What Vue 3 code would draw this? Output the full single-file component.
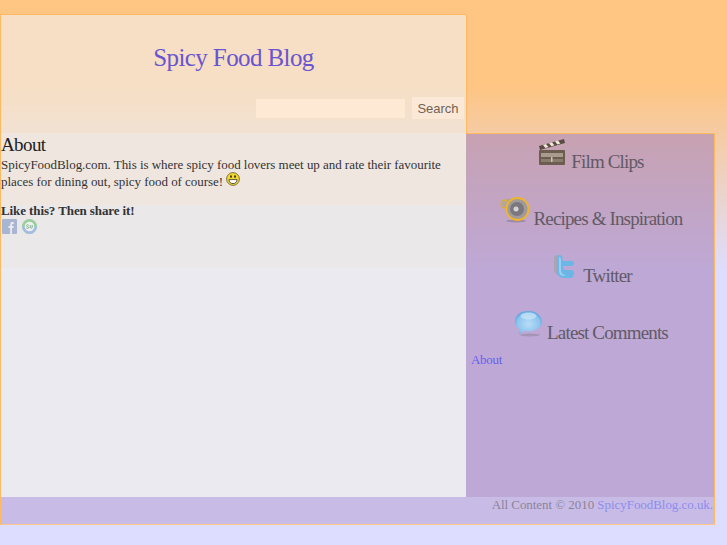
<template>
  <div class="page">
    <header class="header">
      <h1 class="header__title">Spicy Food Blog</h1>
      <form class="search" @submit.prevent>
        <input class="search__input" type="text" />
        <button class="search__button" type="button">Search</button>
      </form>
    </header>

    <div class="columns">
      <main class="main">
        <h2 class="main__heading">About</h2>
        <p class="main__text">
          SpicyFoodBlog.com. This is where spicy food lovers meet up and rate their favourite
          places for dining out, spicy food of course!
          <svg class="smiley" viewBox="0 0 14 14" width="14" height="14">
            <circle cx="7" cy="7" r="6.4" fill="#f4d72e" stroke="#6f6a3a" stroke-width="0.9" />
            <ellipse cx="5" cy="4.6" rx="0.9" ry="1.4" fill="#333" />
            <ellipse cx="9" cy="4.6" rx="0.9" ry="1.4" fill="#333" />
            <path d="M3 7.600h8c0 2.600-1.800 4-4 4s-4-1.400-4-4z" fill="#fff" stroke="#333" stroke-width="0.8" />
          </svg>
        </p>
        <h3 class="main__share">Like this? Then share it!</h3>
        <div class="share">
          <svg viewBox="0 0 15 15" width="15" height="15">
            <rect width="15" height="15" rx="1" fill="#a9b6d2" />
            <path d="M8.200 15V9h-1.700V7h1.700V5.400C8.200 3.600 9.200 3 10.600 3h1.200v2h-1c-.6 0-.8.3-.8.8V7h1.800l-.3 2H10v6z" fill="#eceaf0" />
          </svg>
          <svg viewBox="0 0 15 15" width="15" height="15">
            <circle cx="7.500" cy="7.500" r="7.500" fill="#97cf9c" />
            <path d="M0 7.500h15A7.500 7.500 0 0 1 0 7.500z" fill="#a3bde2" />
            <circle cx="7.500" cy="7.500" r="4.800" fill="#eef0ee" />
            <path d="M6.600 6.200c-.5-1-2-.6-2 .4 0 1.200 2 .8 2 2 0 1-1.600 1-2.200.3M8.200 6v2.400c0 1 2 1 2 0V6" fill="none" stroke="#7fae8d" stroke-width="1" />
          </svg>
        </div>
      </main>

      <aside class="sidebar">
        <a class="feature feature--film">
          <svg class="feature__icon" viewBox="0 0 28 28" width="28" height="28">
            <path d="M1 8 26 1l1 4-25 7z" fill="#5a4c42" />
            <path d="M5 6.900 8 6l2.400 3-3 .9zM11 5.200l3-.9 2.400 3-3 .9zM17 3.500l3-.9 2.400 3-3 .9z" fill="#efe9dc" />
            <rect x="1" y="12" width="26" height="15" rx="1" fill="#6c5d50" />
            <rect x="3" y="15" width="22" height="4" fill="#a79c8d" />
            <rect x="3" y="21" width="22" height="3" fill="#8b7d6e" />
            <rect x="13" y="19" width="1.500" height="5" fill="#ccc3b4" />
          </svg>
          <span class="feature__label">Film Clips</span>
        </a>
        <a class="feature">
          <svg class="feature__icon" viewBox="0 0 30 26" width="30" height="26">
            <ellipse cx="16" cy="24" rx="10" ry="1.500" fill="#9d8aa8" />
            <path d="M4 3 17 0v24L5 11z" fill="#aaa3a8" />
            <ellipse cx="4.500" cy="7" rx="3.500" ry="4" fill="#b4a89c" stroke="#e0ad35" stroke-width="1.300" />
            <circle cx="17.500" cy="12" r="11" fill="#a09a9c" stroke="#f0b428" stroke-width="1.800" />
            <circle cx="17" cy="12" r="7" fill="#7b777f" />
            <circle cx="16" cy="12" r="2.500" fill="#d6d2d4" />
          </svg>
          <span class="feature__label">Recipes &amp; Inspiration</span>
        </a>
        <a class="feature feature--twitter">
          <svg class="feature__icon" viewBox="0 0 22 26" width="22" height="26">
            <path d="M1 4c0-2 1.500-3 3-3h3l1 20H7c-3.500 0-6-2-6-6z" fill="#a8a6b4" />
            <path d="M4 4c0-2 1-3 2.500-3S9.500 2 9.500 4v3h9c1.800 0 2.500 1 2.500 2.500S20 12 18.500 12h-8.600c0 3 1 4 3 4h5.600c1.500 0 2.500 1 2.500 2.500S20 24 18.500 24H11c-4.500 0-7-3-7-7z" fill="#6bb6e6" />
            <path d="M6 3c1 0 2 1 2 2v11c0 3 2 5 5 6h-2c-3 0-5-2-5-5z" fill="#99d0f1" />
          </svg>
          <span class="feature__label">Twitter</span>
        </a>
        <a class="feature">
          <svg class="feature__icon" viewBox="0 0 29 27" width="29" height="27">
            <defs>
              <radialGradient id="bubble" cx="0.5" cy="0.55" r="0.6">
                <stop offset="0" stop-color="#b8dcf6" />
                <stop offset="0.7" stop-color="#8cc4ee" />
                <stop offset="1" stop-color="#4f97da" />
              </radialGradient>
            </defs>
            <ellipse cx="16" cy="25" rx="10" ry="1.500" fill="#a595b4" />
            <path d="M14.500 1C7 1 1 5 1 11.500c0 3.500 2 6.300 5 8l-.8 5 5-3.700c1.400.3 2.800.4 4.300.4 7.500 0 13.500-4.200 13.500-9.700S22 1 14.500 1z" fill="url(#bubble)" />
            <ellipse cx="14.500" cy="6" rx="8" ry="3.500" fill="#dbeefa" fill-opacity="0.55" />
          </svg>
          <span class="feature__label">Latest Comments</span>
        </a>
        <a class="sidebar__link">About</a>
      </aside>
    </div>

    <footer class="footer">
      All Content © 2010 <a class="footer__link">SpicyFoodBlog.co.uk.</a>
    </footer>
  </div>
</template>

<script setup>
</script>

<style>
html,
body {
  margin: 0;
  min-height: 545px;
  background: linear-gradient(to bottom, #fec583 0, #fec583 85px, #ddddff 272px, #ddddff 100%);
  background-repeat: no-repeat;
}
</style>

<style scoped>
.page {
  box-sizing: border-box;
  width: 715px;
  padding-top: 14px;
  font-family: "Liberation Serif", serif;
}

.header {
  box-sizing: border-box;
  width: 467px;
  height: 119px;
  border: 1px solid #fdba62;
  border-bottom: 0;
  background: rgba(239, 244, 249, 0.55);
  display: flex;
  flex-direction: column;
  justify-content: space-between;
}

.header__title {
  margin: 29px 0 0;
  font-size: 25px;
  font-weight: 400;
  line-height: 28px;
  letter-spacing: -0.6px;
  text-align: center;
  color: #6a55d0;
}

.search {
  display: flex;
  justify-content: flex-end;
  align-items: center;
  gap: 7px;
  padding-right: 2px;
  padding-bottom: 14px;
}

.search__input {
  box-sizing: border-box;
  width: 149px;
  height: 19px;
  border: 0;
  padding: 0;
  background: #fee9d5;
}

.search__button {
  box-sizing: border-box;
  width: 52px;
  height: 22px;
  border: 0;
  padding: 0;
  background: #fce8d6;
  color: #6e6358;
  font-family: "Liberation Sans", sans-serif;
  font-size: 13px;
}

.columns {
  display: flex;
  height: 364px;
}

.main {
  box-sizing: border-box;
  width: 466px;
  border-left: 1px solid #fdba62;
  background: linear-gradient(to bottom, #efe6e0 0, #efe6e0 72px, #ebe8ea 72px, #ebe8ea 135px, #eaeaf0 135px);
  color: #333;
}

.main__heading {
  margin: 0;
  padding-top: 2px;
  font-size: 19px;
  font-weight: 400;
  line-height: 20px;
  letter-spacing: -0.6px;
  color: #222;
}

.main__text {
  margin: 0;
  padding-top: 1px;
  font-size: 13px;
  line-height: 17px;
  letter-spacing: -0.04px;
}

.smiley {
  vertical-align: 0;
  margin-left: 0;
  margin-top: -4px;
}

.main__share {
  margin: 13px 0 0;
  font-size: 13px;
  line-height: 16px;
  font-weight: 700;
  letter-spacing: -0.1px;
}

.share {
  display: flex;
  gap: 5px;
  padding-left: 1px;
}

.sidebar {
  box-sizing: border-box;
  flex: 1;
  padding-left: 2px;
  border-top: 1px solid #fdba62;
  border-right: 1px solid #fdba62;
  background: rgba(168, 133, 187, 0.6);
  display: flex;
  flex-direction: column;
}

.feature {
  display: flex;
  justify-content: center;
  align-items: flex-end;
  gap: 4px;
  height: 38px;
  color: #615a66;
  font-size: 19px;
  letter-spacing: -0.85px;
}

.feature + .feature {
  margin-top: 19px;
}

.feature--film {
  gap: 5px;
}

.feature--twitter {
  gap: 8px;
  padding-left: 3px;
}

.feature__icon {
  flex: none;
  margin-bottom: 6px;
}

.feature__label {
  line-height: 20px;
}

.sidebar__link {
  margin-left: 3px;
  padding-top: 9px;
  font-size: 13px;
  letter-spacing: -0.3px;
  color: #6a5ef0;
}

.footer {
  box-sizing: border-box;
  height: 28px;
  border-left: 1px solid #fdba62;
  border-right: 1px solid #fdba62;
  border-bottom: 1px solid #fdc98a;
  background: #c8bce6;
  color: #8c8398;
  font-size: 13px;
  line-height: 16px;
  letter-spacing: -0.05px;
  text-align: right;
  padding-right: 1px;
}

.footer__link {
  color: #8c8cf0;
}
</style>
